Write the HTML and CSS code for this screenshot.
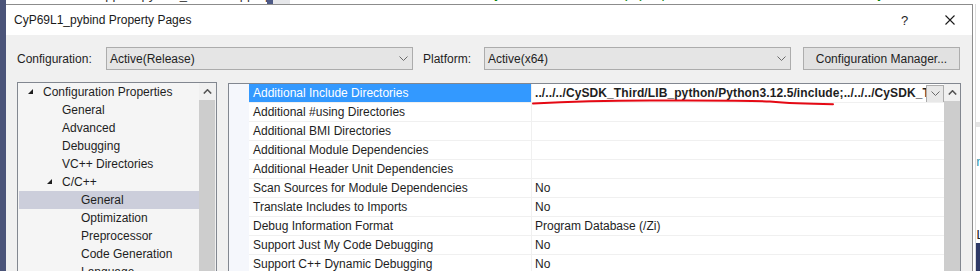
FILE: index.html
```html
<html lang="en">
<head>
  <meta charset="UTF-8">
  <title>CyP69L1_pybind Property Pages</title>
  <link rel="stylesheet" href="styles.css">
</head>
<body>
  <div class="desk-side"></div>
  <div class="desk">
    <div class="editor-strip">
      <div class="tab-bits"><span class="tab-text">Source.cpp &nbsp;&nbsp;&nbsp;&nbsp; pybind_module.cpp &nbsp; py</span></div>
      <div class="strip-blue"></div>
      <div class="strip-grey"></div>
      <div class="code-line"><span class="line-no">33</span><span class="fold">&#8964;</span><span class="comment">// Don't let Python.h #define (v)snprintf as macro because they are im</span></div>
    </div>
    <div class="desk-row">
      <div class="dialog">
        <div class="title-bar">
          <span class="title">CyP69L1_pybind Property Pages</span>
          <div class="caption-btns">
            <span class="caption-btn help">?</span>
            <span class="caption-btn close">
              <svg width="10" height="10" viewBox="0 0 10 10"><path d="M0.5 0.5 L9.5 9.5 M9.5 0.5 L0.5 9.5" stroke="#1a1a1a" stroke-width="1.1" fill="none"/></svg>
            </span>
          </div>
        </div>

        <div class="dialog-body">
          <div class="config-row">
            <label class="config-label">Configuration:</label>
            <div class="combo">
              <span>Active(Release)</span>
              <svg class="chev" width="9" height="5" viewBox="0 0 9 5"><path d="M0.5 0.5 L4.5 4.5 L8.5 0.5" stroke="#6a6a6a" fill="none"/></svg>
            </div>
            <label class="config-label platform">Platform:</label>
            <div class="combo">
              <span>Active(x64)</span>
              <svg class="chev" width="9" height="5" viewBox="0 0 9 5"><path d="M0.5 0.5 L4.5 4.5 L8.5 0.5" stroke="#6a6a6a" fill="none"/></svg>
            </div>
            <button class="config-btn">Configuration Manager...</button>
          </div>

          <div class="panels">
            <div class="tree">
              <div class="tree-list">
                <div class="tree-row lvl0"><span class="twisty"><svg width="5" height="5" viewBox="0 0 5 5"><polygon points="5,0 5,5 0,5" fill="#1e1e1e"/></svg></span>Configuration Properties</div>
                <div class="tree-row lvl1">General</div>
                <div class="tree-row lvl1">Advanced</div>
                <div class="tree-row lvl1">Debugging</div>
                <div class="tree-row lvl1">VC++ Directories</div>
                <div class="tree-row lvl1-node"><span class="twisty"><svg width="5" height="5" viewBox="0 0 5 5"><polygon points="5,0 5,5 0,5" fill="#1e1e1e"/></svg></span>C/C++</div>
                <div class="tree-row lvl2 selected">General</div>
                <div class="tree-row lvl2">Optimization</div>
                <div class="tree-row lvl2">Preprocessor</div>
                <div class="tree-row lvl2">Code Generation</div>
                <div class="tree-row lvl2">Language</div>
              </div>
              <div class="scrollbar">
                <div class="scroll-up"><svg width="9" height="5" viewBox="0 0 9 5"><path d="M0.8 4.5 L4.5 0.8 L8.2 4.5" stroke="#555" stroke-width="1.6" fill="none"/></svg></div>
                <div class="scroll-thumb"></div>
              </div>
            </div>

            <div class="grid">
              <div class="grid-body">
                <div class="grid-row">
                  <div class="gutter"></div>
                  <div class="name selected">Additional Include Directories</div>
                  <div class="value modified">
                    <span class="value-text">../../../CySDK_Third/LIB_python/Python3.12.5/include;../../../CySDK_Third/LIB_python/Python3.12.5/libs</span>
                    <span class="drop-btn"><svg width="9" height="5" viewBox="0 0 9 5"><path d="M0.5 0.5 L4.5 4.5 L8.5 0.5" stroke="#6a6a6a" fill="none"/></svg></span>
                  </div>
                </div>
                <div class="grid-row"><div class="gutter"></div><div class="name">Additional #using Directories</div><div class="value"></div></div>
                <div class="grid-row"><div class="gutter"></div><div class="name">Additional BMI Directories</div><div class="value"></div></div>
                <div class="grid-row"><div class="gutter"></div><div class="name">Additional Module Dependencies</div><div class="value"></div></div>
                <div class="grid-row"><div class="gutter"></div><div class="name">Additional Header Unit Dependencies</div><div class="value"></div></div>
                <div class="grid-row"><div class="gutter"></div><div class="name">Scan Sources for Module Dependencies</div><div class="value">No</div></div>
                <div class="grid-row"><div class="gutter"></div><div class="name">Translate Includes to Imports</div><div class="value">No</div></div>
                <div class="grid-row"><div class="gutter"></div><div class="name">Debug Information Format</div><div class="value">Program Database (/Zi)</div></div>
                <div class="grid-row"><div class="gutter"></div><div class="name">Support Just My Code Debugging</div><div class="value">No</div></div>
                <div class="grid-row"><div class="gutter"></div><div class="name">Support C++ Dynamic Debugging</div><div class="value">No</div></div>
              </div>
              <div class="scrollbar">
                <div class="scroll-up"><svg width="9" height="5" viewBox="0 0 9 5"><path d="M0.8 4.5 L4.5 0.8 L8.2 4.5" stroke="#555" stroke-width="1.6" fill="none"/></svg></div>
                <div class="scroll-thumb"></div>
              </div>
            </div>
          </div>
        </div>
      </div>

      <div class="right-strip">
        <div class="rs-band"></div>
        <div class="rs-text teal">n</div>
        <div class="rs-text dark">Lr</div>
        <div class="rs-navy"></div>
      </div>
    </div>
  </div>

  <!-- red pen mark someone drew under the include path -->
  <svg class="pen-mark" width="310" height="10" viewBox="0 0 310 10">
    <path d="M3 6.5 C 30 5, 60 3.5, 120 3.5 C 180 3.5, 220 3.2, 240 4.5 C 260 6.5, 285 7, 303 7.2" stroke="#e50914" stroke-width="2" fill="none" stroke-linecap="round"/>
  </svg>
</body>
</html>
```

FILE: styles.css
```css
* {
  box-sizing: border-box;
}

body {
  margin: 0;
  width: 980px;
  height: 271px;
  overflow: hidden;
  display: flex;
  position: relative;
  background: #ffffff;
  font-family: "Liberation Sans", Arial, sans-serif;
  font-size: 12px;
  color: #1e1e1e;
}

.desk-side {
  width: 6px;
  flex: none;
  background: #4b5479;
}

.desk {
  flex: 1;
  display: flex;
  flex-direction: column;
  min-width: 0;
}

/* editor peeking above the dialog */
.editor-strip {
  height: 4px;
  flex: none;
  display: flex;
  overflow: hidden;
  background: #ffffff;
}

.tab-bits {
  width: 261px;
  flex: none;
  overflow: hidden;
}

.tab-text {
  display: block;
  margin-top: -12px;
  padding-left: 48px;
  white-space: nowrap;
  font-size: 13px;
  line-height: 14px;
  color: #333;
}

.strip-blue {
  width: 6px;
  flex: none;
  background: #4d5a86;
}

.strip-grey {
  width: 17px;
  flex: none;
  background: #e6e7ea;
}

.code-line {
  flex: 1;
  white-space: nowrap;
  overflow: hidden;
  font-family: "Liberation Mono", monospace;
  font-size: 13.3px;
  line-height: 14px;
  margin-top: -12px;
}

.line-no {
  display: inline-block;
  width: 70px;
  padding-left: 26px;
  color: #2b91af;
}

.fold {
  display: inline-block;
  width: 22px;
  color: #777;
}

.comment {
  color: #008000;
}

.desk-row {
  flex: 1;
  display: flex;
  min-height: 0;
}

.dialog {
  width: 967px;
  flex: none;
  border-top: 1px solid #8c8c8c;
  border-right: 1px solid #8c8c8c;
  background: #f0f0f0;
}

.title-bar {
  height: 30px;
  display: flex;
  align-items: center;
  padding-left: 8px;
  background: #ffffff;
}

.title {
  color: #1a1a1a;
}

.caption-btns {
  margin-left: auto;
  display: flex;
  height: 100%;
}

.caption-btn {
  width: 45px;
  display: flex;
  align-items: center;
  justify-content: center;
}

.help {
  font-size: 13px;
}

.dialog-body {
  padding: 12px 0 0 11px;
}

.config-row {
  display: flex;
  align-items: center;
  height: 23px;
}

.config-label {
  width: 89px;
  flex: none;
}

.config-label.platform {
  width: 61px;
  margin-left: 10px;
}

.combo {
  width: 307px;
  height: 23px;
  display: flex;
  align-items: center;
  padding: 0 4px 0 3px;
  background: #e5e5e5;
  border: 1px solid #acacac;
}

.combo span {
  flex: 1;
}

.config-btn {
  width: 157px;
  height: 23px;
  margin-left: 12px;
  padding: 0;
  font-family: inherit;
  font-size: 12px;
  color: #1e1e1e;
  background: #e1e1e1;
  border: 1px solid #adadad;
}

.panels {
  display: flex;
  gap: 11px;
  margin-top: 12px;
}

.tree {
  width: 200px;
  height: 200px;
  display: flex;
  border: 1px solid #828790;
  background: #f5f5f5;
}

.tree-list {
  width: 181px;
  padding-left: 1px;
}

.tree-row {
  height: 18px;
  display: flex;
  align-items: center;
  white-space: nowrap;
}

.twisty {
  width: 15px;
  flex: none;
  display: flex;
  align-items: center;
  padding-bottom: 1px;
}

.lvl0 {
  padding-left: 9px;
}

.lvl1 {
  padding-left: 43px;
}

.lvl1-node {
  padding-left: 28px;
}

.lvl2 {
  padding-left: 62px;
}

.tree-row.selected {
  background: #cccedb;
}

.scrollbar {
  width: 17px;
  flex: none;
  display: flex;
  flex-direction: column;
  background: #f0f0f0;
}

.scroll-up {
  height: 17px;
  display: flex;
  align-items: center;
  justify-content: center;
}

.scroll-thumb {
  flex: 1;
  margin-right: 1px;
  background: #cdcdcd;
}

.grid {
  width: 733px;
  height: 200px;
  margin-top: 1px;
  display: flex;
  border: 1px solid #828790;
  background: #ffffff;
}

.grid-body {
  flex: 1;
  min-width: 0;
}

.grid .scrollbar {
  width: 16px;
}

.grid .scroll-thumb {
  margin-right: 0;
}

.grid-row {
  display: grid;
  grid-template-columns: 20px 283px 1fr;
  height: 19px;
}

.gutter {
  background: #f5f7fc;
}

.name,
.value {
  display: flex;
  align-items: center;
  padding-left: 4px;
  white-space: nowrap;
  overflow: hidden;
  border-bottom: 1px solid #f0f0f0;
}

.name {
  border-right: 1px solid #f0f0f0;
}

.name.selected {
  background: #3399ff;
  color: #ffffff;
}

.value {
  padding-left: 3px;
  min-width: 0;
}

.value.modified {
  font-weight: bold;
  padding-right: 0;
}

.value-text {
  flex: 1;
  overflow: hidden;
  white-space: nowrap;
  letter-spacing: 0.1px;
}

.drop-btn {
  width: 18px;
  height: 18px;
  flex: none;
  display: flex;
  align-items: center;
  justify-content: center;
  background: #e8e8e8;
  border: 1px solid #acacac;
  margin-top: 1px;
}

.right-strip {
  flex: 1;
  display: flex;
  flex-direction: column;
  background: #ffffff;
  border-left: 1px solid #dcdcdc;
  margin-left: 2px;
}

.rs-band {
  height: 5px;
  margin-top: 118px;
  background: #e4e4e4;
}

.rs-text {
  font-family: "Liberation Mono", monospace;
  font-size: 13px;
  white-space: nowrap;
  overflow: hidden;
}

.rs-text.teal {
  margin-top: 28px;
  color: #2b91af;
}

.rs-text.dark {
  margin-top: 58px;
  color: #222;
}

.rs-navy {
  flex: 1;
  background: #2f3a66;
}

.pen-mark {
  position: absolute;
  left: 530px;
  top: 97px;
}
```
